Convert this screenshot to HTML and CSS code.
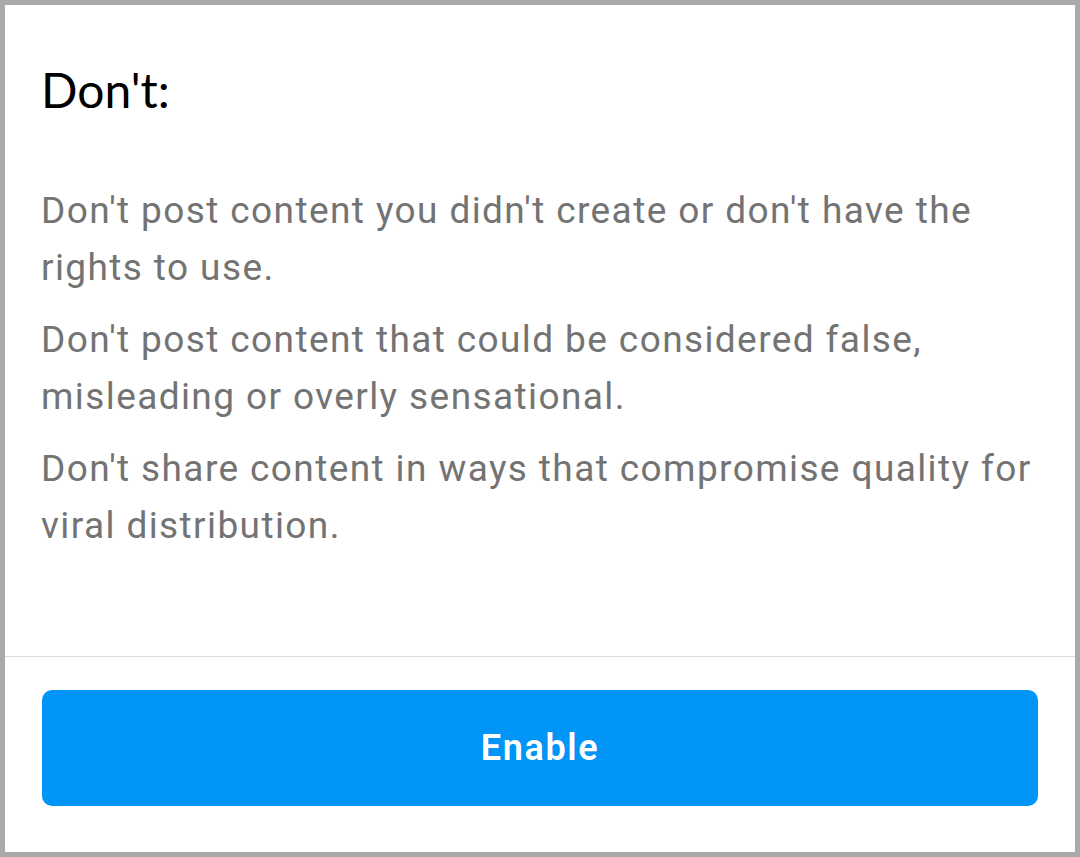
FILE: index.html
```html
<!DOCTYPE html>
<html lang="en">
<head>
<meta charset="utf-8">
<title>Don't</title>
<link rel="stylesheet" href="styles.css">
</head>
<body>
<div class="sheet">
  <section class="content">
    <h1 class="title">Don't:</h1>
    <div class="rules">
      <p class="rule">Don't post content you didn't create or don't have the rights to use.</p>
      <p class="rule">Don't post content that could be considered false, misleading or overly sensational.</p>
      <p class="rule">Don't share content in ways that compromise quality for viral distribution.</p>
    </div>
  </section>
  <footer class="footer">
    <button class="enable" type="button">Enable</button>
  </footer>
</div>
</body>
</html>
```
FILE: styles.css
```css
html, body {
  margin: 0;
  padding: 0;
  height: 100%;
}
body {
  background: #a9a9a9;
  font-family: Roboto, "Liberation Sans", sans-serif;
}
.sheet {
  box-sizing: border-box;
  height: 857px;
  width: 1080px;
  border: 5px solid #a9a9a9;
  background: #ffffff;
  display: flex;
  flex-direction: column;
}
.content {
  flex: 1;
  padding: 55px 10px 0 36px;
}
.title {
  margin: 0;
  font-family: Lato, "Open Sans", sans-serif;
  font-weight: 400;
  font-size: 48px;
  line-height: 60px;
  color: #000000;
}
.rules {
  margin-top: 62px;
  display: flex;
  flex-direction: column;
  gap: 15px;
}
.rule {
  margin: 0;
  font-size: 37px;
  line-height: 57px;
  letter-spacing: 1.4px;
  color: #737373;
  padding-left: 0;
}
.footer {
  border-top: 1px solid #dbdbdb;
  padding: 33px 37px 46px;
}
.enable {
  display: flex;
  align-items: center;
  justify-content: center;
  width: 100%;
  height: 116px;
  border: 0;
  border-radius: 10px;
  background: #0095f6;
  color: #ffffff;
  font-family: Roboto, "Liberation Sans", sans-serif;
  font-weight: 600;
  font-size: 36px;
  letter-spacing: 1.6px;
  padding: 0;
}
```
